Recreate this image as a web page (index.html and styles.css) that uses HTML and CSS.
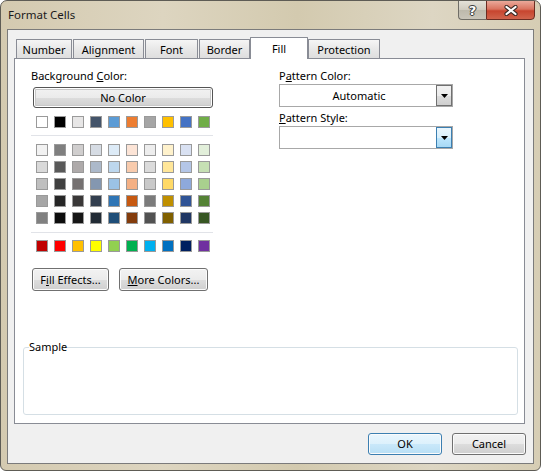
FILE: index.html
```html
<!DOCTYPE html>
<html>
<head>
<meta charset="utf-8">
<link rel="stylesheet" href="styles.css">
</head>
<body>
<div class="window">
  <div class="titlebar">
    <span class="title">Format Cells</span>
    <div class="caps">
      <div class="cap help">?</div>
      <div class="cap close">
        <svg width="14" height="11" viewBox="0 0 14 11"><path d="M2.5 2 L11.5 9 M11.5 2 L2.5 9" stroke="#3b2a25" stroke-width="4.2" stroke-linecap="round"/><path d="M2.5 2 L11.5 9 M11.5 2 L2.5 9" stroke="#fff" stroke-width="2.2" stroke-linecap="round"/></svg>
      </div>
    </div>
  </div>
  <div class="client">
    <div class="tabs">
      <div class="tab w-number">Number</div>
      <div class="tab w-align">Alignment</div>
      <div class="tab w-font">Font</div>
      <div class="tab w-border">Border</div>
      <div class="tab sel w-fill">Fill</div>
      <div class="tab w-prot">Protection</div>
    </div>
    <div class="panel">
      <div class="cols">
        <div class="left">
          <div class="label">Background <u>C</u>olor:</div>
          <button class="btn nocolor">No Color</button>
          <div class="row top">
            <span class="sw" style="background:#ffffff"></span><span class="sw" style="background:#000000"></span><span class="sw" style="background:#e7e6e6"></span><span class="sw" style="background:#44546a"></span><span class="sw" style="background:#5b9bd5"></span><span class="sw" style="background:#ed7d31"></span><span class="sw" style="background:#a5a5a5"></span><span class="sw" style="background:#ffc000"></span><span class="sw" style="background:#4472c4"></span><span class="sw" style="background:#70ad47"></span>
          </div>
          <div class="sep"></div>
          <div class="grid">
            <span class="sw" style="background:#f2f2f2"></span><span class="sw" style="background:#7f7f7f"></span><span class="sw" style="background:#d0cece"></span><span class="sw" style="background:#d6dce4"></span><span class="sw" style="background:#ddebf7"></span><span class="sw" style="background:#fce4d6"></span><span class="sw" style="background:#ededed"></span><span class="sw" style="background:#fff2cc"></span><span class="sw" style="background:#d9e1f2"></span><span class="sw" style="background:#e2efda"></span>
            <span class="sw" style="background:#d9d9d9"></span><span class="sw" style="background:#595959"></span><span class="sw" style="background:#aeaaaa"></span><span class="sw" style="background:#acb9ca"></span><span class="sw" style="background:#bdd7ee"></span><span class="sw" style="background:#f8cbad"></span><span class="sw" style="background:#dbdbdb"></span><span class="sw" style="background:#ffe699"></span><span class="sw" style="background:#b4c6e7"></span><span class="sw" style="background:#c6e0b4"></span>
            <span class="sw" style="background:#bfbfbf"></span><span class="sw" style="background:#404040"></span><span class="sw" style="background:#757171"></span><span class="sw" style="background:#8497b0"></span><span class="sw" style="background:#9bc2e6"></span><span class="sw" style="background:#f4b084"></span><span class="sw" style="background:#c9c9c9"></span><span class="sw" style="background:#ffd966"></span><span class="sw" style="background:#8ea9db"></span><span class="sw" style="background:#a9d08e"></span>
            <span class="sw" style="background:#a6a6a6"></span><span class="sw" style="background:#262626"></span><span class="sw" style="background:#3a3838"></span><span class="sw" style="background:#333f4f"></span><span class="sw" style="background:#2f75b5"></span><span class="sw" style="background:#c65911"></span><span class="sw" style="background:#7b7b7b"></span><span class="sw" style="background:#bf8f00"></span><span class="sw" style="background:#305496"></span><span class="sw" style="background:#548235"></span>
            <span class="sw" style="background:#808080"></span><span class="sw" style="background:#0d0d0d"></span><span class="sw" style="background:#161616"></span><span class="sw" style="background:#222b35"></span><span class="sw" style="background:#1f4e78"></span><span class="sw" style="background:#833c0c"></span><span class="sw" style="background:#525252"></span><span class="sw" style="background:#806000"></span><span class="sw" style="background:#203764"></span><span class="sw" style="background:#375623"></span>
          </div>
          <div class="sep sep2"></div>
          <div class="row std">
            <span class="sw" style="background:#c00000"></span><span class="sw" style="background:#ff0000"></span><span class="sw" style="background:#ffc000"></span><span class="sw" style="background:#ffff00"></span><span class="sw" style="background:#92d050"></span><span class="sw" style="background:#00b050"></span><span class="sw" style="background:#00b0f0"></span><span class="sw" style="background:#0070c0"></span><span class="sw" style="background:#002060"></span><span class="sw" style="background:#7030a0"></span>
          </div>
          <div class="btnrow">
            <button class="btn fill-eff">F<u>i</u>ll Effects...</button>
            <button class="btn more"><u>M</u>ore Colors...</button>
          </div>
        </div>
        <div class="right">
          <div class="label">P<u>a</u>ttern Color:</div>
          <div class="combo">
            <div class="combo-text">Automatic</div>
            <div class="combo-btn"><svg width="7" height="4" viewBox="0 0 7 4"><polygon points="0,0 7,0 3.5,4" fill="#000"/></svg></div>
          </div>
          <div class="label label2"><u>P</u>attern Style:</div>
          <div class="combo">
            <div class="combo-text"></div>
            <div class="combo-btn hot"><svg width="7" height="4" viewBox="0 0 7 4"><polygon points="0,0 7,0 3.5,4" fill="#000"/></svg></div>
          </div>
        </div>
      </div>
      <fieldset class="sample"><legend>Sample</legend></fieldset>
    </div>
    <div class="footer">
      <button class="btn ok">OK</button>
      <button class="btn cancel">Cancel</button>
    </div>
  </div>
</div>
</body>
</html>
```
FILE: styles.css
```css
html, body { margin: 0; background: #ffffff; }
body { font: 11px "Noto Sans", "DejaVu Sans", sans-serif; color: #000; }
u { text-decoration: underline; text-underline-offset: 1px; }

.window {
  width: 541px; height: 471px; box-sizing: border-box;
  border: 1px solid #5e5c55; border-radius: 7px 7px 6px 6px;
  background: linear-gradient(90deg, #d4cab0 0%, #ddd5c0 30%, #d3caaf 55%, #ddd6c3 80%, #d6cdb4 100%);
  display: flex; flex-direction: column; overflow: hidden;
}
.titlebar { height: 28px; display: flex; align-items: flex-start; padding-left: 7px; flex: none; }
.title { margin-top: 6px; line-height: 16px; color: #1a1a1a; font-size: 11.5px; }
.caps { margin-left: auto; margin-right: 5px; margin-top: -1px; display: flex; }
.cap { height: 20px; box-sizing: border-box; display: flex; align-items: center; justify-content: center; }
.help {
  width: 28px; border: 1px solid #6f6d66; border-right: none; border-radius: 0 0 0 4px;
  background: linear-gradient(#e4e1d8, #cfcbbf 50%, #bdb9ac 51%, #c9c5b9);
  color: #fff; font-weight: bold; font-size: 13px; font-family: "DejaVu Sans", sans-serif;
  text-shadow: 0 0 1px #333, 0 0 1px #333, 1px 0 0 #444, -1px 0 0 #444, 0 1px 0 #444, 0 -1px 0 #444;
}
.close {
  width: 49px; border: 1px solid #6b2c22; border-radius: 0 0 4px 0;
  background: linear-gradient(#eaa99a, #d9735f 45%, #c7452f 55%, #d0644c);
}

.client {
  flex: 1; margin: 0 6px 6px 6px; border: 1px solid #7b7b7b; background: #f0f0f0;
  display: flex; flex-direction: column;
}
.tabs { display: flex; align-items: flex-end; height: 21px; margin: 7px 0 0 8px; }
.tab {
  height: 19px; box-sizing: border-box; border: 1px solid #898c95; border-bottom: none;
  background: linear-gradient(#f5f5f5, #e8e8e8 50%, #dedede);
  text-align: center; line-height: 16px; padding-top: 2px; margin-right: 1px;
  border-radius: 1px 1px 0 0;
}
.tab.sel {
  height: 22px; background: #fff; margin: 0 0 -1px -1px; padding-top: 3px;
  position: relative; z-index: 1;
}
.w-number { width: 56px; }
.w-align { width: 71px; }
.w-font { width: 53px; }
.w-border { width: 51px; }
.w-fill { width: 58px; }
.w-prot { width: 72px; }

.panel {
  margin: 0 8px 0 6px; height: 366px; box-sizing: border-box;
  border: 1px solid #898c95; background: #fff; display: flex; flex-direction: column;
}
.cols { display: flex; gap: 66px; padding: 9px 0 0 16px; }
.left { width: 182px; display: flex; flex-direction: column; }
.right { width: 174px; display: flex; flex-direction: column; }
.label { line-height: 16px; height: 16px; white-space: nowrap; }
.label2 { margin-top: 3px; }

.btn {
  box-sizing: border-box; border: 1px solid #707070; border-radius: 3px; padding: 0;
  background: linear-gradient(#f2f2f2 0%, #ebebeb 50%, #dddddd 51%, #cfcfcf 100%);
  box-shadow: inset 0 0 0 1px #fbfbfb; font: inherit; color: #000; line-height: 16px;
}
.nocolor { margin: 3px 0 0 2px; width: 180px; height: 21px; border-color: #555; box-shadow: inset 0 0 0 1px #ffffff, inset 0 0 0 2px #c8c8c8; }

.row { display: flex; gap: 6px; padding-left: 5px; }
.row.top { margin-top: 8px; }
.row.std { margin-top: 7px; }
.sw { width: 12px; height: 12px; box-sizing: border-box; border: 1px solid #9a9a9a; flex: none; }
.sep { height: 1px; background: #e1e3e8; margin-top: 7px; }
.sep2 { margin-top: 8px; }
.grid { display: grid; grid-template-columns: repeat(10, 12px); column-gap: 6px; row-gap: 5px; margin-top: 8px; padding-left: 5px; }

.btnrow { display: flex; gap: 10px; margin-top: 16px; padding-left: 1px; }
.fill-eff { width: 77px; height: 23px; }
.more { width: 89px; height: 23px; }

.combo { height: 23px; box-sizing: border-box; border: 1px solid #a8a8a8; background: #fff; display: flex; }
.combo-text { flex: 1; text-align: center; line-height: 21px; padding-left: 2px; }
.combo-btn {
  width: 16px; box-sizing: border-box; border: 1px solid #707070; display: flex; align-items: center; justify-content: center;
  background: linear-gradient(#f2f2f2, #ebebeb 50%, #dddddd 51%, #cfcfcf);
}
.combo-btn.hot { border-color: #3c7fb1; background: linear-gradient(#eaf6fd, #d9f0fc 50%, #bee6fd 51%, #a7d9f5); }

.sample {
  margin: auto 6px 8px 8px; padding: 0; height: 76px; box-sizing: border-box;
  border: 1px solid #d5dfe5; border-radius: 3px; min-width: 0;
}
.sample legend { padding: 0; margin-left: 5px; line-height: 16px; }

.footer { display: flex; justify-content: flex-end; gap: 10px; padding: 9px 7px 0 0; }
.ok, .cancel { width: 74px; height: 22px; }
.ok { border-color: #3c7fb1; background: linear-gradient(#eaf6fd 0%, #dcf1fc 50%, #c9e8fa 51%, #b9dff5 100%); }
```
